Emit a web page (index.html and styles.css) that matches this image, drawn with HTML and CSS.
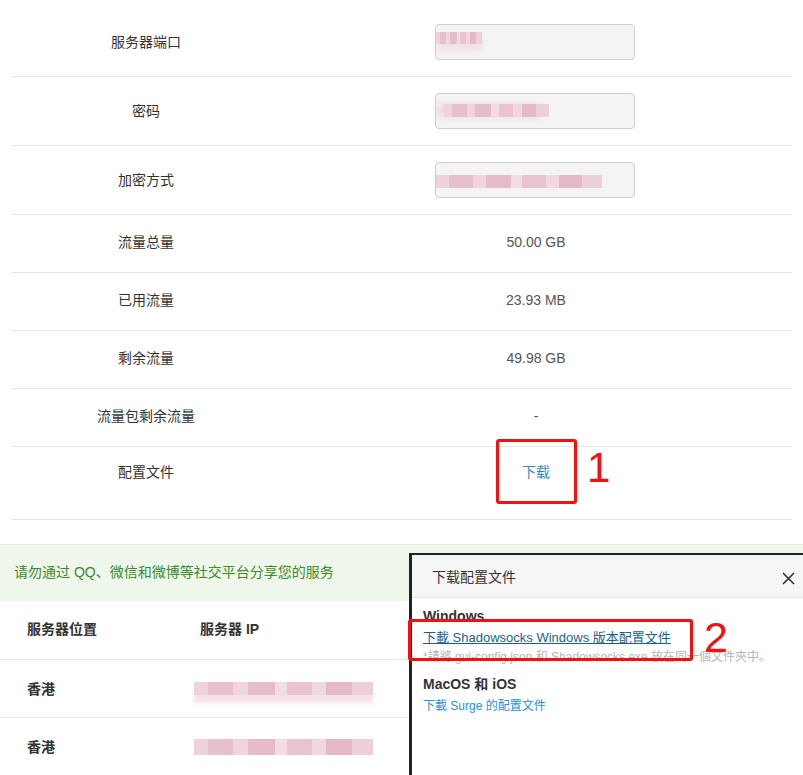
FILE: index.html
```html
<!DOCTYPE html>
<html lang="zh-CN">
<head>
<meta charset="utf-8">
<title>服务详情</title>
<link rel="stylesheet" href="styles.css">
</head>
<body>
<div class="page">
  <div class="info">
    <div class="row row-input">
      <div class="label">服务器端口</div>
      <div class="value"><div class="field field-1"><div class="mosaic m-port"></div></div></div>
    </div>
    <div class="row row-input">
      <div class="label">密码</div>
      <div class="value"><div class="field field-2"><div class="mosaic m-pass"></div></div></div>
    </div>
    <div class="row row-input">
      <div class="label">加密方式</div>
      <div class="value"><div class="field field-3"><div class="mosaic m-method"></div></div></div>
    </div>
    <div class="row row-text">
      <div class="label">流量总量</div>
      <div class="value">50.00 GB</div>
    </div>
    <div class="row row-text">
      <div class="label">已用流量</div>
      <div class="value">23.93 MB</div>
    </div>
    <div class="row row-text">
      <div class="label">剩余流量</div>
      <div class="value">49.98 GB</div>
    </div>
    <div class="row row-text">
      <div class="label">流量包剩余流量</div>
      <div class="value">-</div>
    </div>
    <div class="row row-file">
      <div class="label">配置文件</div>
      <div class="value"><a class="dl-link" href="#">下载</a></div>
    </div>
  </div>

  <div class="alert">请勿通过 QQ、微信和微博等社交平台分享您的服务</div>

  <div class="servers">
    <div class="srow shead">
      <div class="scell">服务器位置</div>
      <div class="scell">服务器 IP</div>
    </div>
    <div class="srow">
      <div class="scell loc">香港</div>
      <div class="scell"><div class="mosaic m-ip1"></div></div>
    </div>
    <div class="srow">
      <div class="scell loc">香港</div>
      <div class="scell"><div class="mosaic m-ip2"></div></div>
    </div>
  </div>

  <div class="modal">
    <div class="modal-head">
      <span class="modal-title">下载配置文件</span>
      <svg class="close" width="13" height="13" viewBox="0 0 13 13"><path d="M1 1 L12 12 M12 1 L1 12" stroke="#333" stroke-width="1.6" fill="none"/></svg>
    </div>
    <div class="modal-body">
      <div class="os">Windows</div>
      <a class="cfg-link active" href="#">下載 Shadowsocks Windows 版本配置文件</a>
      <div class="note">*請將 gui-config.json 和 Shadowsocks.exe 放在同一個文件夾中。</div>
      <div class="os os-mac">MacOS 和 iOS</div>
      <a class="cfg-link surge" href="#">下載 Surge 的配置文件</a>
    </div>
  </div>

  <div class="mark box-1"></div>
  <div class="num num-1">1</div>
  <div class="mark box-2"></div>
  <div class="num num-2">2</div>
</div>
</body>
</html>
```

FILE: styles.css
```css
html, body {
  margin: 0;
  padding: 0;
  background: #fff;
}
body {
  font-family: "Liberation Sans", "Noto Sans CJK SC", sans-serif;
  font-size: 14px;
  color: #333;
  width: 803px;
  height: 775px;
  overflow: hidden;
}
.page {
  position: relative;
  width: 803px;
  height: 775px;
  overflow: hidden;
}

/* info table */
.info {
  margin: 0 11px 0 12px;
  padding-top: 8px;
}
.row {
  display: grid;
  grid-template-columns: 268px 1fr;
  border-bottom: 1px solid #e6e6e6;
  align-items: center;
}
.label, .value {
  text-align: center;
}
.label { color: #333; }
.value { color: #555; }
.row-input { height: 68px; }
.row-input .label { padding-bottom: 3px; }
.row-text { height: 57px; line-height: 21px; }
.row-text .label, .row-text .value { padding-bottom: 3px; }
.row-file { height: 72px; align-items: start; line-height: 20px; }
.row-file .label, .row-file .value { padding-top: 15px; }

.field {
  width: 198px;
  height: 34px;
  margin: 0 auto;
  border: 1px solid #cfcfcf;
  border-radius: 4px;
  background: #f4f4f4;
  transform: translateX(-1px);
}
.mosaic {
  background:
    linear-gradient(90deg,
      #efd3dc 0 8%, #e8c0cd 8% 22%, #f0d5de 22% 30%, #e6bccb 30% 45%,
      #f3dde4 45% 52%, #e9c4d0 52% 66%, #f1d8e0 66% 74%, #e5b9c7 74% 88%, #eed0da 88% 100%);
}
.m-port {
  margin-top: 7px;
  width: 46px;
  height: 12px;
  box-shadow: 0 6px 6px rgba(238, 205, 215, 0.5);
}
.m-pass {
  margin-top: 10px;
  margin-left: 8px;
  width: 105px;
  height: 13px;
  box-shadow: -8px 0 6px rgba(238, 205, 215, 0.7);
}
.m-method {
  margin-top: 12px;
  width: 166px;
  height: 13px;
}
.dl-link {
  color: #2b8cc4;
  text-decoration: none;
}

/* alert */
.alert {
  margin-top: 24px;
  border-top: 1px solid #e2eddb;
  background: #eff6ec;
  color: #3c8a2a;
  padding: 17px 14px 19px;
  line-height: 20px;
}

/* servers */
.srow {
  display: grid;
  grid-template-columns: 200px 1fr;
  border-bottom: 1px solid #e6e6e6;
  align-items: center;
  height: 57px;
  line-height: 20px;
}
.shead {
  height: 58px;
  font-weight: bold;
  color: #333;
}
.shead .scell { padding-bottom: 2px; }
.srow .scell:first-child { padding-left: 27px; }
.loc { font-weight: bold; color: #333; }
.m-ip1 {
  margin-left: -6px;
  width: 179px;
  height: 13px;
  box-shadow: 0 8px 4px rgba(242, 218, 226, 0.8);
}
.m-ip2 {
  margin-left: -6px;
  width: 179px;
  height: 16px;
}

/* modal */
.modal {
  position: absolute;
  left: 409px;
  top: 553px;
  right: 0;
  bottom: 0;
  background: #fff;
  border-left: 3px solid #222;
  border-top: 2px solid #222;
}
.modal-head {
  height: 42px;
  background: #f6f6f6;
  border-bottom: 1px solid #e8e8e8;
  display: flex;
  align-items: center;
  justify-content: space-between;
  padding: 0 8px 0 20px;
}
.modal-title {
  font-size: 14px;
  color: #333;
}
.close { margin-top: 4px; }
.modal-body {
  padding: 8px 11px 0;
}
.os {
  font-weight: bold;
  line-height: 20px;
  color: #333;
}
.os-mac { margin-top: 7px; }
.cfg-link {
  display: block;
  margin-top: 2px;
  line-height: 20px;
  color: #2592d6;
  text-decoration: none;
}
.cfg-link.active {
  font-size: 13px;
  color: #1d5f8c;
  text-decoration: underline;
}
.cfg-link.surge { font-size: 12px; }
.note {
  font-size: 12px;
  color: #b5b5b5;
  line-height: 19px;
}

/* annotations */
.mark {
  position: absolute;
  border: 3px solid #f21010;
  border-radius: 3px;
  box-sizing: border-box;
}
.box-1 { left: 496px; top: 439px; width: 81px; height: 65px; }
.box-2 { left: 408px; top: 619px; width: 285px; height: 42px; }
.num {
  position: absolute;
  font-family: "Liberation Sans", sans-serif;
  color: #f21010;
  line-height: 1;
}
.num-1 { left: 587px; top: 447px; font-size: 42px; }
.num-2 { left: 704px; top: 616px; font-size: 43px; }
```
